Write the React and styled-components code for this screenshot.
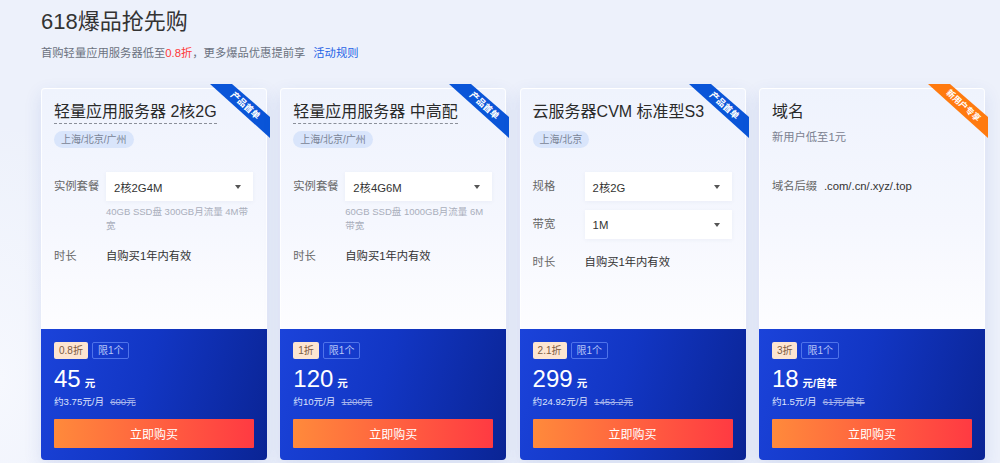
import React from 'react'
import styled, { createGlobalStyle } from 'styled-components'

const GlobalStyle = createGlobalStyle`
  html, body {
    margin: 0;
    padding: 0;
  }
  body {
    background: radial-gradient(ellipse 120px 260px at 0px 380px, #f6f8fe 0%, rgba(246, 248, 254, 0) 100%), #edf1fb;
    font-family: "Liberation Sans", "Noto Sans CJK SC", sans-serif;
    color: #333;
    width: 1000px;
    height: 463px;
    overflow: hidden;
  }
`

const Page = styled.div`
  padding: 7px 0 0 41px;
`

const PageTitle = styled.h1`
  margin: 0;
  font-size: 22px;
  line-height: 30px;
  font-weight: 400;
  color: #333;
`

const PageSub = styled.p`
  margin: 8px 0 0;
  font-size: 11.3px;
  line-height: 16px;
  color: #6b7280;
`

const Red = styled.span`
  color: #ff3a3a;
`

const RuleLink = styled.a`
  margin-left: 8px;
  color: #1f63e6;
  text-decoration: none;
`

const Grid = styled.div`
  display: grid;
  grid-template-columns: repeat(4, 226px);
  column-gap: 13.3px;
  margin-top: 27px;
`

const Card = styled.div`
  position: relative;
  height: 372px;
  display: flex;
  flex-direction: column;
  border-radius: 4px;
  box-shadow: 0 6px 18px rgba(40, 70, 170, 0.12);
`

const Top = styled.div`
  flex: 1;
  padding: 12px 13px 0 12px;
  border: 1px solid rgba(255, 255, 255, 0.85);
  border-bottom: none;
  border-radius: 4px 4px 0 0;
  background: linear-gradient(180deg, #eff3fd 0%, #f5f7fe 55%, #fdfdff 100%);
`

const Head = styled.div`
  height: 47px;
  display: flex;
  flex-direction: column;
  align-items: flex-start;
`

const CardTitle = styled.div`
  font-size: 16px;
  line-height: 22px;
  color: #2a2a2a;
  white-space: nowrap;
  border-bottom: 1px dashed ${(p) => (p.$dashed ? '#8a8f99' : 'transparent')};
`

const Region = styled.span`
  margin-top: 7px;
  height: 17px;
  line-height: 17px;
  padding: 0 7px;
  border-radius: 9px;
  background: #d9e5fb;
  color: #7a8496;
  font-size: 10px;
`

const CardSub = styled.div`
  margin-top: 5px;
  font-size: 11.3px;
  line-height: 16px;
  color: #7b8190;
`

const Form = styled.div`
  margin-top: 24px;
  display: flex;
  flex-direction: column;
  gap: 9px;
`

const Row = styled.div`
  display: flex;
  align-items: flex-start;
`

const Label = styled.div`
  width: 52px;
  flex: none;
  height: 29px;
  line-height: 29px;
  font-size: 11.3px;
  color: #666;
`

const Field = styled.div`
  flex: 1;
  min-width: 0;
`

const Value = styled.div`
  height: 29px;
  line-height: 29px;
  font-size: 11.3px;
  color: #333;
  white-space: nowrap;
`

const Select = styled.div`
  height: 29px;
  display: flex;
  align-items: center;
  justify-content: space-between;
  padding: 0 12px 0 8px;
  background: #fff;
  box-shadow: 0 1px 4px rgba(60, 80, 140, 0.06);
  font-size: 11.3px;
  color: #333;
`

const Caret = styled.span`
  width: 0;
  height: 0;
  border-left: 3.5px solid transparent;
  border-right: 3.5px solid transparent;
  border-top: 4px solid #555;
`

const Note = styled.div`
  margin-top: 4px;
  width: 145px;
  font-size: 9.5px;
  line-height: 14px;
  color: #a9aebb;
`

const Bottom = styled.div`
  height: 131px;
  box-sizing: border-box;
  padding: 13px 13px 0;
  border-radius: 0 0 4px 4px;
  background: linear-gradient(105deg, #1b43da 0%, #1236c4 45%, #0a2494 100%);
`

const Tags = styled.div`
  display: flex;
  gap: 4px;
`

const Tag = styled.span`
  height: 17px;
  box-sizing: border-box;
  line-height: ${(p) => (p.$outline ? '15px' : '17px')};
  padding: 0 5px;
  font-size: 10px;
  border-radius: 2px;
  color: ${(p) => (p.$outline ? '#b9c7f7' : '#7d5a40')};
  background: ${(p) => (p.$outline ? 'transparent' : '#fde5d1')};
  border: ${(p) => (p.$outline ? '1px solid #4f73ea' : 'none')};
`

const Price = styled.div`
  margin-top: 6px;
  height: 28px;
  display: flex;
  align-items: baseline;
  gap: 4px;
  color: #fff;
`

const Amount = styled.span`
  font-size: 24px;
  line-height: 28px;
`

const Unit = styled.span`
  font-size: 10.5px;
  font-weight: 700;
`

const Monthly = styled.div`
  margin-top: 2px;
  font-size: 9.6px;
  line-height: 14px;
  color: #dde4fb;
  white-space: nowrap;
`

const Original = styled.s`
  margin-left: 6px;
  color: #a8b6ec;
`

const BuyButton = styled.button`
  margin-top: 10px;
  width: 100%;
  height: 29px;
  border: none;
  border-radius: 1px;
  padding: 0;
  background: linear-gradient(90deg, #ff8a3b 0%, #ff5a40 60%, #ff3a42 100%);
  color: #fff;
  font-family: inherit;
  font-size: 12px;
  cursor: pointer;
`

const RibbonWrap = styled.div`
  position: absolute;
  top: -4px;
  right: -3px;
  width: 60px;
  height: 54px;
`

const Ribbon = ({ text, color }) => (
  <RibbonWrap>
    <svg width="60" height="54" viewBox="0 0 60 54">
      <polygon points="0,0 22,0 60,33 60,54" fill={color} />
      <text
        x="35"
        y="22"
        fill="#fff"
        fontSize={text.length > 4 ? 8.5 : 9}
        fontWeight="700"
        textAnchor="middle"
        dominantBaseline="middle"
        fontFamily='"Noto Sans CJK SC", sans-serif'
        transform="rotate(42 35 22)"
      >
        {text}
      </text>
    </svg>
  </RibbonWrap>
)

const cards = [
  {
    title: '轻量应用服务器 2核2G',
    dashed: true,
    region: '上海/北京/广州',
    ribbon: { text: '产品首单', color: '#0a55d8' },
    rows: [
      { label: '实例套餐', select: '2核2G4M', note: '40GB SSD盘 300GB月流量 4M带宽' },
      { label: '时长', value: '自购买1年内有效' },
    ],
    discount: '0.8折',
    price: '45',
    unit: '元',
    monthly: '约3.75元/月',
    original: '600元',
  },
  {
    title: '轻量应用服务器 中高配',
    dashed: true,
    region: '上海/北京/广州',
    ribbon: { text: '产品首单', color: '#0a55d8' },
    rows: [
      { label: '实例套餐', select: '2核4G6M', note: '60GB SSD盘 1000GB月流量 6M带宽' },
      { label: '时长', value: '自购买1年内有效' },
    ],
    discount: '1折',
    price: '120',
    unit: '元',
    monthly: '约10元/月',
    original: '1200元',
  },
  {
    title: '云服务器CVM 标准型S3',
    region: '上海/北京',
    ribbon: { text: '产品首单', color: '#0a55d8' },
    rows: [
      { label: '规格', select: '2核2G' },
      { label: '带宽', select: '1M' },
      { label: '时长', value: '自购买1年内有效' },
    ],
    discount: '2.1折',
    price: '299',
    unit: '元',
    monthly: '约24.92元/月',
    original: '1453.2元',
  },
  {
    title: '域名',
    sub: '新用户低至1元',
    ribbon: { text: '新用户专享', color: '#ff7a0f' },
    rows: [{ label: '域名后缀', value: '.com/.cn/.xyz/.top' }],
    discount: '3折',
    price: '18',
    unit: '元/首年',
    monthly: '约1.5元/月',
    original: '61元/首年',
  },
]

const ProductCard = ({ card }) => (
  <Card>
    <Top>
      <Head>
        <CardTitle $dashed={card.dashed}>{card.title}</CardTitle>
        {card.region && <Region>{card.region}</Region>}
        {card.sub && <CardSub>{card.sub}</CardSub>}
      </Head>
      <Form>
        {card.rows.map((row) => (
          <Row key={row.label}>
            <Label>{row.label}</Label>
            <Field>
              {row.select ? (
                <Select>
                  {row.select}
                  <Caret />
                </Select>
              ) : (
                <Value>{row.value}</Value>
              )}
              {row.note && <Note>{row.note}</Note>}
            </Field>
          </Row>
        ))}
      </Form>
    </Top>
    <Bottom>
      <Tags>
        <Tag>{card.discount}</Tag>
        <Tag $outline>限1个</Tag>
      </Tags>
      <Price>
        <Amount>{card.price}</Amount>
        <Unit>{card.unit}</Unit>
      </Price>
      <Monthly>
        {card.monthly}
        <Original>{card.original}</Original>
      </Monthly>
      <BuyButton>立即购买</BuyButton>
    </Bottom>
    <Ribbon text={card.ribbon.text} color={card.ribbon.color} />
  </Card>
)

const App = () => (
  <>
    <GlobalStyle />
    <Page>
      <PageTitle>618爆品抢先购</PageTitle>
      <PageSub>
        首购轻量应用服务器低至<Red>0.8折</Red>，更多爆品优惠提前享
        <RuleLink href="#">活动规则</RuleLink>
      </PageSub>
      <Grid>
        {cards.map((card) => (
          <ProductCard key={card.title} card={card} />
        ))}
      </Grid>
    </Page>
  </>
)

export default App
